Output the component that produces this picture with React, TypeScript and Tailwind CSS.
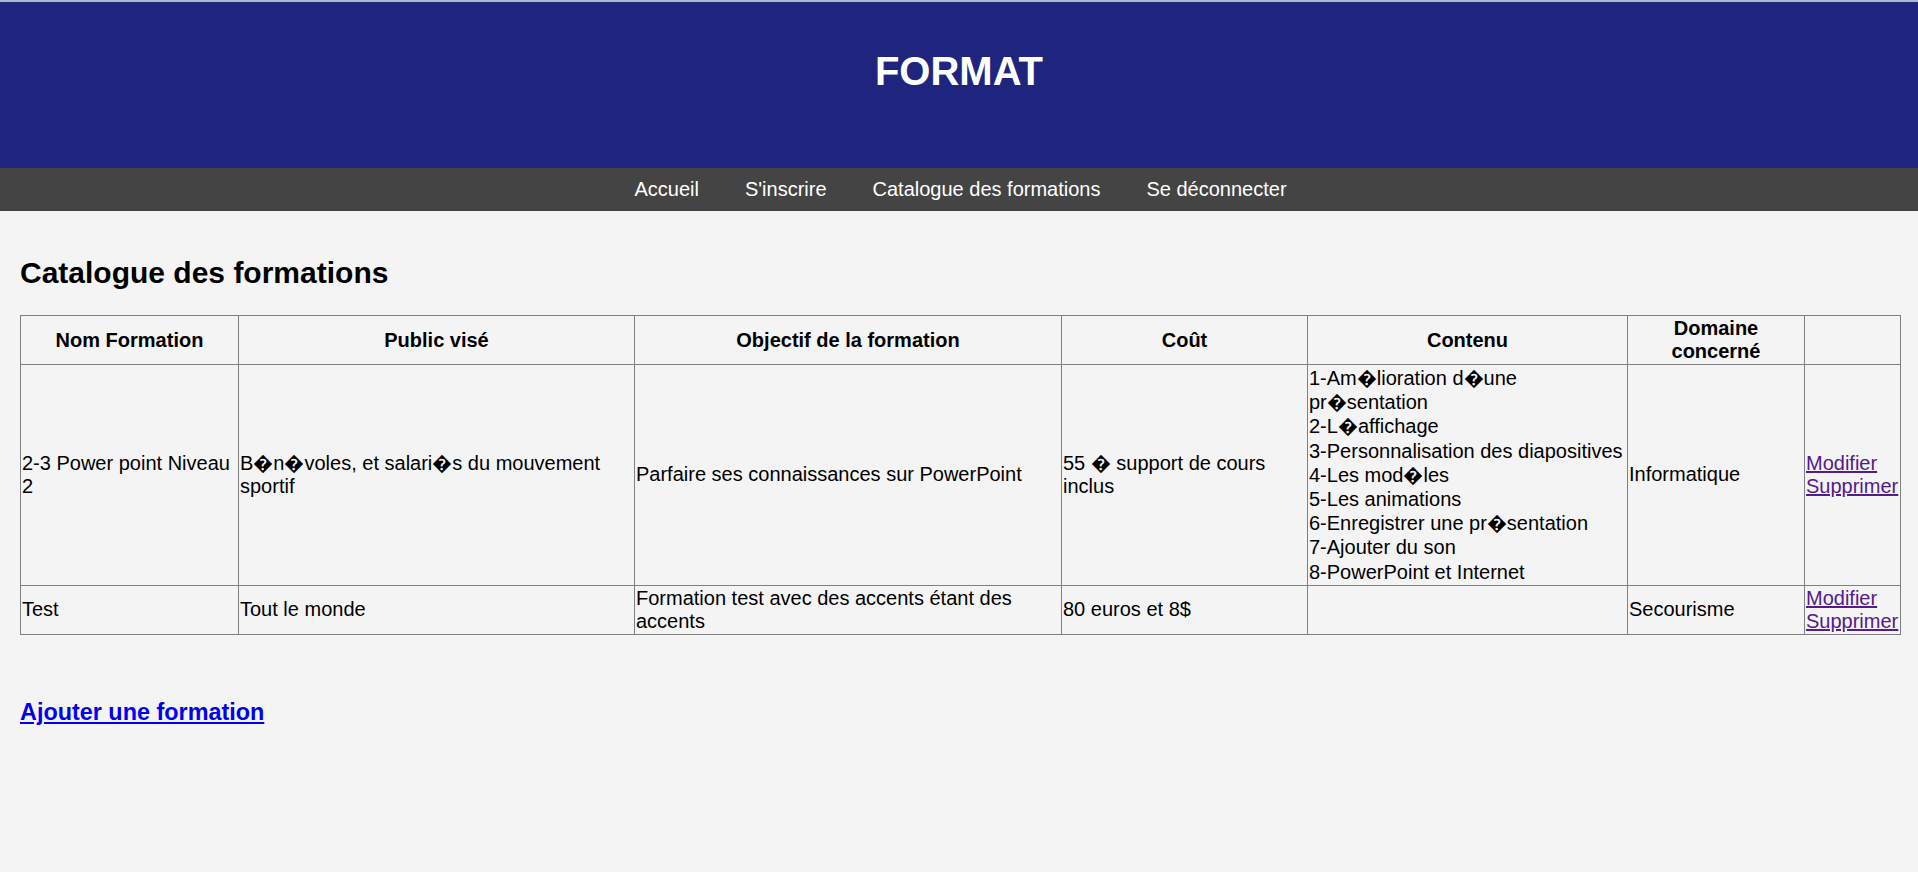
export default function App() {
  const navLinks = ["Accueil", "S'inscrire", "Catalogue des formations", "Se déconnecter"];
  const contenu = [
    "1-Am\uFFFDlioration d\uFFFDune pr\uFFFDsentation",
    "2-L\uFFFDaffichage",
    "3-Personnalisation des diapositives",
    "4-Les mod\uFFFDles",
    "5-Les animations",
    "6-Enregistrer une pr\uFFFDsentation",
    "7-Ajouter du son",
    "8-PowerPoint et Internet",
  ];

  return (
    <div className="min-h-screen bg-[#f4f4f4] font-['Liberation_Sans',Arial,sans-serif] text-[20px] text-black">
      {/* top strip */}
      <div className="h-[2px] bg-[#a6b9cd]"></div>

      {/* Header */}
      <header className="h-[166px] bg-[#1f257e] text-center">
        <h1 className="pt-[46px] text-[40px] leading-[46px] font-bold text-white">FORMAT</h1>
      </header>

      {/* Nav */}
      <nav className="flex h-[43px] items-center justify-center bg-[#444444] pl-[3px]">
        {navLinks.map((l) => (
          <a key={l} className="px-[23px] text-white leading-[23px]">
            {l}
          </a>
        ))}
      </nav>

      <main className="px-[20px] pt-[20px]">
        <h2 className="my-[25px] text-[30px] font-bold leading-[34px]">Catalogue des formations</h2>

        <table className="w-[1880px] table-fixed border-collapse border border-[#808080] leading-[23px]">
          <colgroup>
            <col className="w-[218px]" />
            <col className="w-[396px]" />
            <col className="w-[427px]" />
            <col className="w-[246px]" />
            <col className="w-[320px]" />
            <col className="w-[177px]" />
            <col className="w-[96px]" />
          </colgroup>
          <thead>
            <tr>
              <th className="border border-[#808080] p-[1px] font-bold">Nom Formation</th>
              <th className="border border-[#808080] p-[1px] font-bold">Public visé</th>
              <th className="border border-[#808080] p-[1px] font-bold">Objectif de la formation</th>
              <th className="border border-[#808080] p-[1px] font-bold">Coût</th>
              <th className="border border-[#808080] p-[1px] font-bold">Contenu</th>
              <th className="border border-[#808080] p-[1px] font-bold">Domaine concerné</th>
              <th className="border border-[#808080] p-[1px]"></th>
            </tr>
          </thead>
          <tbody>
            <tr>
              <td className="border border-[#808080] p-[1px] align-middle">2-3 Power point Niveau 2</td>
              <td className="border border-[#808080] p-[1px] align-middle">
                B{"\uFFFD"}n{"\uFFFD"}voles, et salari{"\uFFFD"}s du mouvement sportif
              </td>
              <td className="border border-[#808080] p-[1px] align-middle">Parfaire ses connaissances sur PowerPoint</td>
              <td className="border border-[#808080] p-[1px] align-middle">55 {"\uFFFD"} support de cours inclus</td>
              <td className="border border-[#808080] p-[1px] align-middle leading-[24.2px]">
                {contenu.map((c) => (
                  <div key={c}>{c}</div>
                ))}
              </td>
              <td className="border border-[#808080] p-[1px] align-middle">Informatique</td>
              <td className="border border-[#808080] p-[1px] align-middle">
                <a className="text-[#551a8b] underline">Modifier</a>
                <br />
                <a className="text-[#551a8b] underline">Supprimer</a>
              </td>
            </tr>
            <tr>
              <td className="border border-[#808080] p-[1px] align-middle">Test</td>
              <td className="border border-[#808080] p-[1px] align-middle">Tout le monde</td>
              <td className="border border-[#808080] p-[1px] align-middle">Formation test avec des accents étant des accents</td>
              <td className="border border-[#808080] p-[1px] align-middle">80 euros et 8$</td>
              <td className="border border-[#808080] p-[1px] align-middle"></td>
              <td className="border border-[#808080] p-[1px] align-middle">Secourisme</td>
              <td className="border border-[#808080] p-[1px] align-middle">
                <a className="text-[#551a8b] underline">Modifier</a>
                <br />
                <a className="text-[#551a8b] underline">Supprimer</a>
              </td>
            </tr>
          </tbody>
        </table>

        <h3 className="mt-[64px] text-[23.4px] font-bold leading-[27px]">
          <a className="text-[#0000ee] underline">Ajouter une formation</a>
        </h3>
      </main>
    </div>
  );
}
